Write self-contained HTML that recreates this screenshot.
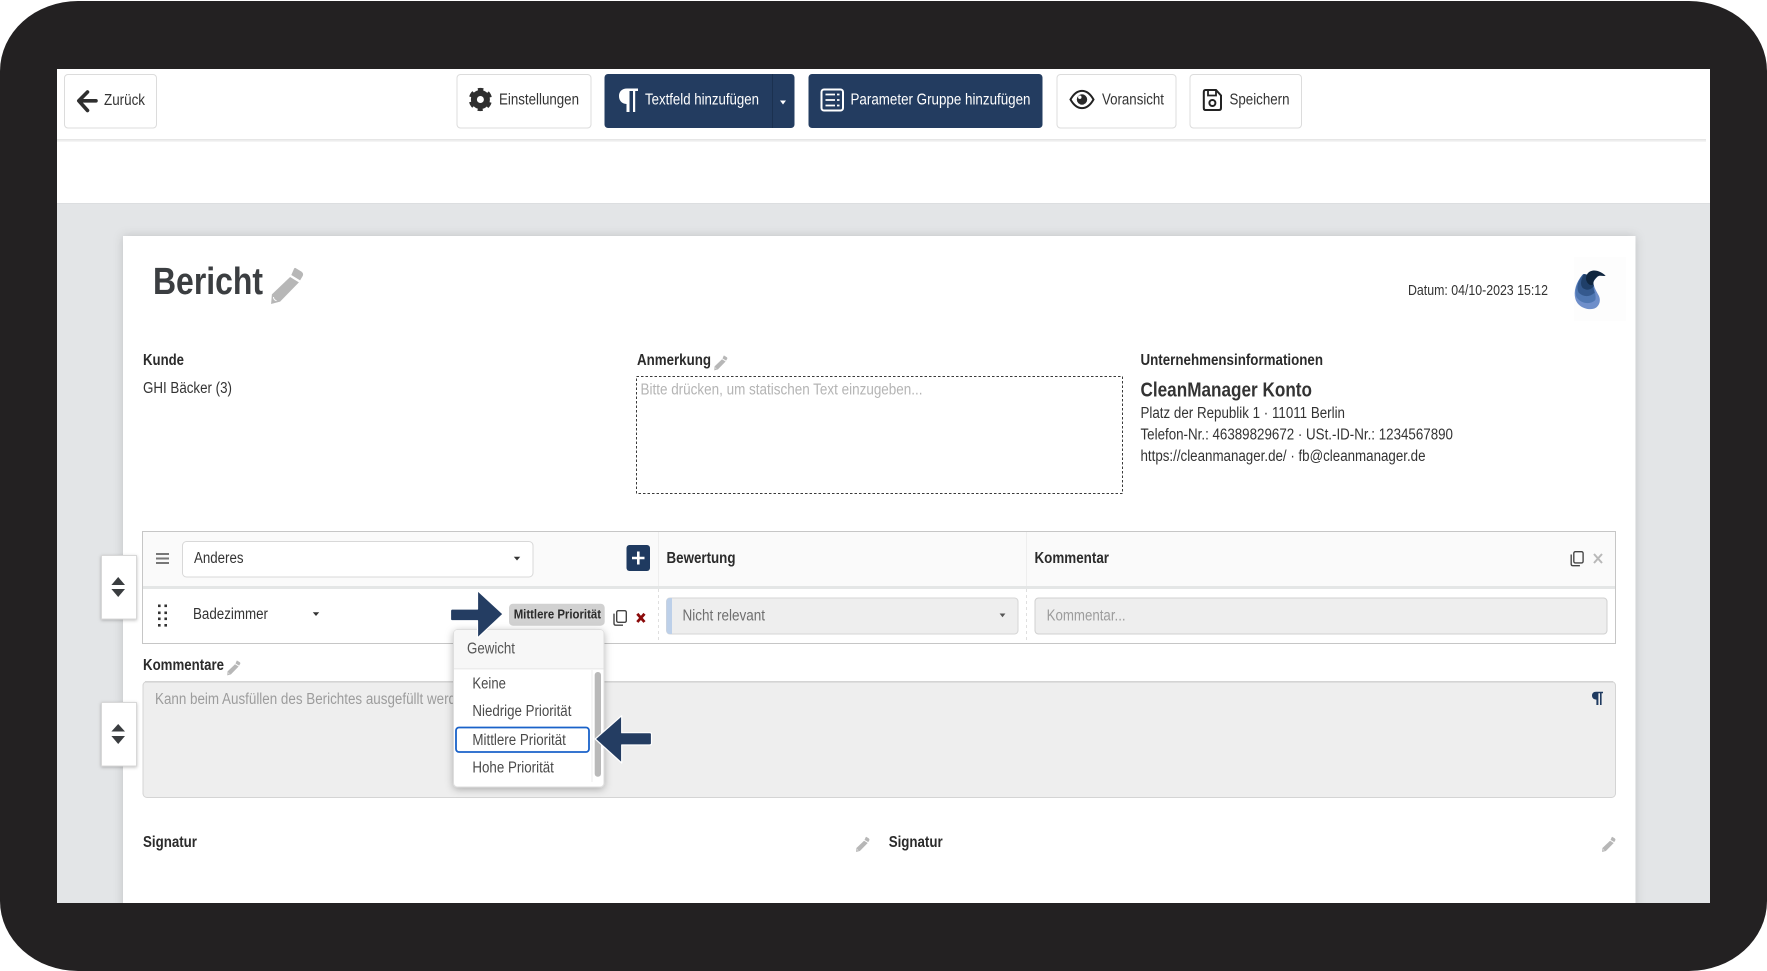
<!DOCTYPE html>
<html lang="de">
<head>
<meta charset="utf-8">
<title>Bericht</title>
<style>
html,body{margin:0;padding:0;background:#fff;width:1767px;height:971px;overflow:hidden}
svg{display:block}
text{font-family:"Liberation Sans",sans-serif;font-size:15.5px;fill:#333}
.b{font-weight:700;fill:#2b2b2b}
.w{fill:#fff}
.g{fill:#b4b4b4}
.m{fill:#9c9c9c}
.t{filter:blur(.3px)}
</style>
</head>
<body>
<svg width="1767" height="971" viewBox="0 0 1767 971" xmlns="http://www.w3.org/2000/svg">
<defs>
<clipPath id="scr"><rect x="57" y="69" width="1653" height="834"/></clipPath>
<symbol id="pen" viewBox="0 0 33 37">
<path fill="#b7b7b7" d="M25 1 L31 4.6 Q33.4 6.4 32.2 9 L29.6 13.4 L20.8 8 L23.4 2 Q24 .5 25 1 Z"/>
<path fill="#b7b7b7" d="M19.6 10 L28.4 15.4 L9.6 34.6 L.6 37 L1.4 27.4 Z"/>
<path fill="none" stroke="#fff" stroke-width="1" d="M3 30 Q3 33 6 33.6"/>
</symbol>
<symbol id="copy" viewBox="0 0 14 16">
<rect x="3.7" y=".7" width="9.6" height="11.6" rx="1.6" fill="none" stroke="#444" stroke-width="1.4"/>
<path fill="none" stroke="#444" stroke-width="1.4" d="M1 3.6 V13.4 Q1 15.2 2.8 15.2 H10"/>
</symbol>
<filter id="sh" x="-5%" y="-5%" width="110%" height="110%"><feDropShadow dx="0" dy="0" stdDeviation="5" flood-color="#000" flood-opacity=".16"/></filter>
<filter id="sh2" x="-20%" y="-20%" width="140%" height="140%"><feDropShadow dx="0" dy="2" stdDeviation="4" flood-color="#000" flood-opacity=".28"/></filter>
<filter id="sh3" x="-20%" y="-20%" width="140%" height="140%"><feDropShadow dx="0" dy="1" stdDeviation="1.5" flood-color="#000" flood-opacity=".25"/></filter>
</defs>

<rect x="0" y="1" width="1767" height="970" rx="78" ry="70" fill="#232122"/>

<g clip-path="url(#scr)">
<rect x="57" y="69" width="1653" height="834" fill="#e3e5e7"/>
<rect x="57" y="69" width="1653" height="134" fill="#fff"/>
<rect x="57" y="139" width="1649" height="1.5" fill="#e6e6e6"/>
<rect x="57" y="140.5" width="1649" height="1.5" fill="#f4f4f4"/>
<rect x="57" y="203" width="1653" height="1" fill="#dcdee0"/>
<rect x="123" y="236" width="1512.5" height="690" fill="#fff" filter="url(#sh)"/>
</g>

<!-- toolbar -->
<rect x="64.5" y="74.5" width="92" height="53.5" rx="3.5" fill="#fff" stroke="#dcdcdc"/>
<path d="M96 100.8 H80 M87.5 92 L78.8 100.8 L87.5 110.5" fill="none" stroke="#2f2f2f" stroke-width="3.6" stroke-linecap="round" stroke-linejoin="round"/>
<text class="t" x="104" y="105" textLength="41" lengthAdjust="spacingAndGlyphs">Zurück</text>

<rect x="457" y="74.5" width="134" height="53.5" rx="3.5" fill="#fff" stroke="#dcdcdc"/>
<g transform="translate(480.4 99.5)">
<circle r="6.5" fill="none" stroke="#2f2f2f" stroke-width="6"/>
<circle r="10" fill="none" stroke="#2f2f2f" stroke-width="3.2" stroke-dasharray="5.4 5.07" stroke-dashoffset="2.7" transform="rotate(90)"/>
</g>
<text class="t" x="499" y="104.5" textLength="80" lengthAdjust="spacingAndGlyphs">Einstellungen</text>

<rect x="604.5" y="74" width="190" height="54" rx="3.5" fill="#233c60"/>
<rect x="772" y="74" width="1" height="54" fill="#1b3150"/>
<path fill="#fff" d="M638 88.5 H627 C621.5 88.5 619 92 619 96 C619 100.5 621.5 103.6 626.5 104 V112 H629.5 V91 H633 V112 H635.2 V91 H638 Z"/>
<text class="t w" x="645" y="104.5" textLength="114" lengthAdjust="spacingAndGlyphs">Textfeld hinzufügen</text>
<path fill="#fff" d="M780 100.5 H786 L783 104.5 Z"/>

<rect x="808.5" y="74" width="234" height="54" rx="3.5" fill="#233c60"/>
<rect x="821.5" y="89.5" width="21.5" height="21" rx="2.5" fill="none" stroke="#fff" stroke-width="2"/>
<path d="M825.5 94.5 H835 M825.5 100 H835 M825.5 105.5 H835 M837 94.5 H839.5 M837 100 H839.5 M837 105.5 H839.5" stroke="#fff" stroke-width="1.8"/>
<text class="t w" x="850.5" y="104.5" textLength="180" lengthAdjust="spacingAndGlyphs">Parameter Gruppe hinzufügen</text>

<rect x="1057" y="74.5" width="119" height="53.5" rx="3.5" fill="#fff" stroke="#dcdcdc"/>
<path d="M1070.5 99.5 C1077 88 1087 88 1093.5 99.5 C1087 111 1077 111 1070.5 99.5 Z" fill="none" stroke="#222" stroke-width="2"/>
<circle cx="1082" cy="99.5" r="5.2" fill="#2a2a2a"/>
<circle cx="1079.8" cy="97.2" r="1.7" fill="#fff"/>
<text class="t" x="1102" y="104.5" textLength="62" lengthAdjust="spacingAndGlyphs">Voransicht</text>

<rect x="1190" y="74.5" width="111.5" height="53.5" rx="3.5" fill="#fff" stroke="#dcdcdc"/>
<path d="M1205.5 90 H1216 L1221 95.5 V108 Q1221 110 1219 110 H1205.5 Q1203.8 110 1203.8 108 V92 Q1203.8 90 1205.5 90 Z" fill="none" stroke="#222" stroke-width="2"/>
<path d="M1208 90 V95.5 H1216 V90" fill="none" stroke="#222" stroke-width="1.8"/>
<circle cx="1212.4" cy="103" r="3" fill="none" stroke="#222" stroke-width="2"/>
<text class="t" x="1229.5" y="104.5" textLength="60" lengthAdjust="spacingAndGlyphs">Speichern</text>

<!-- head -->
<text class="t" x="153" y="294" textLength="110" lengthAdjust="spacingAndGlyphs" style="font-size:38px;font-weight:700;fill:#3b3e41">Bericht</text>
<use href="#pen" x="270.5" y="267" width="33" height="37"/>
<text class="t" x="1408" y="295" textLength="140" lengthAdjust="spacingAndGlyphs" style="font-size:15px">Datum: 04/10-2023 15:12</text>
<rect x="1574" y="257" width="52" height="64" fill="#fbfbfb" opacity=".6"/>
<g transform="translate(1540 250) scale(.3333)">
<path fill="#6f8fca" d="M128 74 C108 96 100 125 106 146 C112 170 140 182 162 176 C178 170 184 152 176 136 C168 122 160 108 160 94 L175 76 Z"/>
<path fill="#4f77b2" d="M128 74 C110 96 102 122 110 142 C122 160 150 166 166 150 C170 136 160 112 158 94 L175 76 Z"/>
<path fill="#34598e" d="M130 72 C114 92 108 112 116 128 C130 142 150 142 164 128 C160 116 158 106 160 94 L172 78 Z"/>
<path fill="#1f3f69" d="M132 72 C122 90 120 104 128 114 C142 124 154 118 162 108 C158 100 160 92 172 80 Z"/>
<path fill="#10263f" d="M197 77 C186 68 172 60 158 62 C146 64 138 72 138 88 C142 102 150 108 160 104 C158 94 164 84 176 78 C184 76 192 80 197 77 Z"/>
</g>

<!-- info -->
<text class="t b" x="143" y="365" textLength="41" lengthAdjust="spacingAndGlyphs">Kunde</text>
<text class="t" x="143" y="393" textLength="89" lengthAdjust="spacingAndGlyphs">GHI Bäcker (3)</text>
<text class="t b" x="637" y="365" textLength="74" lengthAdjust="spacingAndGlyphs">Anmerkung</text>
<use href="#pen" x="714" y="355" width="13.5" height="15.5"/>
<rect x="636.5" y="376.5" width="486" height="117" fill="#fff" stroke="#3a3a3a" stroke-dasharray="2.5 2"/>
<text class="t g" x="640.5" y="394.5" textLength="282" lengthAdjust="spacingAndGlyphs">Bitte drücken, um statischen Text einzugeben...</text>
<text class="t b" x="1140.5" y="365" textLength="182.5" lengthAdjust="spacingAndGlyphs">Unternehmensinformationen</text>
<text class="t b" x="1140.5" y="396.5" textLength="171.5" lengthAdjust="spacingAndGlyphs" style="font-size:20px;fill:#333">CleanManager Konto</text>
<text class="t" x="1140.5" y="418" textLength="204.5" lengthAdjust="spacingAndGlyphs">Platz der Republik 1 · 11011 Berlin</text>
<text class="t" x="1140.5" y="439.5" textLength="312.5" lengthAdjust="spacingAndGlyphs">Telefon-Nr.: 46389829672 · USt.-ID-Nr.: 1234567890</text>
<text class="t" x="1140.5" y="461" textLength="285" lengthAdjust="spacingAndGlyphs">https://cleanmanager.de/ · fb@cleanmanager.de</text>

<!-- table -->
<rect x="142.5" y="531.5" width="1473" height="112" fill="#fff" stroke="#c6c6c6"/>
<rect x="143" y="532" width="1472" height="54" fill="#fafafa"/>
<rect x="143" y="586" width="1472" height="3" fill="#e4e6e6"/>
<path d="M658.5 532 V586 M1026.5 532 V586" stroke="#eeeeee"/>
<path d="M658.5 589 V643 M1026.5 589 V643" stroke="#dfdfdf" stroke-dasharray="3 3"/>

<path d="M156 554 H169 M156 558.5 H169 M156 563 H169" stroke="#777" stroke-width="1.9"/>
<rect x="182.5" y="541.5" width="350.5" height="35.5" rx="4" fill="#fff" stroke="#d8d8d8"/>
<text class="t" x="194" y="563" textLength="49.5" lengthAdjust="spacingAndGlyphs">Anderes</text>
<path fill="#333" d="M513.8 556.8 H520.2 L517 560.5 Z"/>
<rect x="626.5" y="545" width="23.5" height="26" rx="3" fill="#1f3a60"/>
<path d="M638.3 551.5 V564.5 M632 558 H644.5" stroke="#fff" stroke-width="2.6"/>
<text class="t b" x="666.5" y="563" textLength="69" lengthAdjust="spacingAndGlyphs">Bewertung</text>
<text class="t b" x="1034.5" y="563" textLength="74.5" lengthAdjust="spacingAndGlyphs">Kommentar</text>
<use href="#copy" x="1570" y="551" width="14" height="15.5"/>
<path d="M1594 554 L1602 563 M1602 554 L1594 563" stroke="#b8b8b8" stroke-width="2"/>

<!-- row -->
<g fill="#333">
<rect x="158" y="604.5" width="2.6" height="2.6"/><rect x="164.4" y="604.5" width="2.6" height="2.6"/>
<rect x="158" y="611.5" width="2.6" height="2.6"/><rect x="164.4" y="611.5" width="2.6" height="2.6"/>
<rect x="158" y="617.5" width="2.6" height="2.6"/><rect x="164.4" y="617.5" width="2.6" height="2.6"/>
<rect x="158" y="624" width="2.6" height="2.6"/><rect x="164.4" y="624" width="2.6" height="2.6"/>
</g>
<text class="t" x="193" y="619" textLength="75" lengthAdjust="spacingAndGlyphs">Badezimmer</text>
<path fill="#333" d="M312.8 612.2 H319.2 L316 616 Z"/>
<rect x="509" y="603.7" width="95.7" height="22" rx="4" fill="#d1d1d1"/>
<text class="t" x="513.7" y="618.5" textLength="87.3" lengthAdjust="spacingAndGlyphs" style="font-size:13px;font-weight:700;fill:#2b2b2b">Mittlere Priorität</text>
<use href="#copy" x="613" y="610" width="14" height="16"/>
<path d="M637.3 613.8 L644.5 622 M644.5 613.8 L637.3 622" stroke="#8b0a0a" stroke-width="2.8"/>

<rect x="666.5" y="598" width="351.5" height="36" rx="3.5" fill="#eeeeee" stroke="#d6d6d6"/>
<path d="M672 598 H670 Q666.5 598 666.5 601.5 V630.5 Q666.5 634 670 634 H672 Z" fill="#bdd0e9"/>
<text class="t" x="682.5" y="620.5" textLength="82.5" lengthAdjust="spacingAndGlyphs" style="fill:#6f6f6f">Nicht relevant</text>
<path fill="#555" d="M999.6 613.5 H1005.4 L1002.5 617.2 Z"/>
<rect x="1035" y="598" width="572" height="36" rx="3.5" fill="#eeeeee" stroke="#d0d0d0"/>
<text class="t m" x="1046.6" y="620.5" textLength="79" lengthAdjust="spacingAndGlyphs">Kommentar...</text>

<!-- handles -->
<rect x="101.5" y="555.5" width="35" height="63.5" fill="#fff" stroke="#d8d8d8" filter="url(#sh3)"/>
<path fill="#3a3d40" d="M118.2 577 L125 585 H111.4 Z M111.4 589 H125 L118.2 597 Z"/>
<rect x="101.5" y="702.5" width="35" height="63.5" fill="#fff" stroke="#d8d8d8" filter="url(#sh3)"/>
<path fill="#3a3d40" d="M118.2 724 L125 731.5 H111.4 Z M111.4 736 H125 L118.2 744 Z"/>

<!-- kommentare -->
<text class="t b" x="143" y="670" textLength="81" lengthAdjust="spacingAndGlyphs">Kommentare</text>
<use href="#pen" x="227" y="660" width="13.5" height="15.5"/>
<rect x="143" y="681.5" width="1472.5" height="116" rx="4" fill="#eeeeee" stroke="#d4d4d4"/>
<rect x="145" y="681" width="1468" height="1.6" fill="#d4d4d4"/>
<text class="t m" x="155" y="704" textLength="301" lengthAdjust="spacingAndGlyphs">Kann beim Ausfüllen des Berichtes ausgefüllt werd</text>
<path fill="#1f3a60" d="M1603 691.7 H1596 C1593.4 691.7 1592 693.4 1592 695.5 C1592 698 1593.8 699.6 1596.4 699.6 V705 H1598.4 V693.2 H1600 V705 H1601.6 V693.2 H1603 Z"/>

<!-- dropdown -->
<rect x="453.5" y="629.5" width="150.5" height="157.5" rx="4" fill="#fff" stroke="#dedede" filter="url(#sh2)"/>
<path d="M454 668 V633.5 Q454 630 457.5 630 H600 Q603.5 630 603.5 633.5 V668 Z" fill="#f7f7f7"/>
<rect x="454" y="668" width="149.5" height="1.5" fill="#ececec"/>
<text class="t" x="467" y="653.5" textLength="48" lengthAdjust="spacingAndGlyphs" style="fill:#555">Gewicht</text>
<rect x="591.5" y="670" width="1" height="112" fill="#eeeeee"/>
<rect x="594.7" y="672" width="6.3" height="104.7" rx="3" fill="#b9b9b9"/>
<text class="t" x="472.4" y="688.5" textLength="33.5" lengthAdjust="spacingAndGlyphs" style="fill:#4a4a4a">Keine</text>
<text class="t" x="472.4" y="716" textLength="99" lengthAdjust="spacingAndGlyphs" style="fill:#4a4a4a">Niedrige Priorität</text>
<rect x="456" y="727.5" width="133" height="24.5" rx="3" fill="#fff" stroke="#1a62c9" stroke-width="1.8"/>
<text class="t" x="472.4" y="745" textLength="93.5" lengthAdjust="spacingAndGlyphs" style="fill:#4a4a4a">Mittlere Priorität</text>
<text class="t" x="472.4" y="772.5" textLength="81.5" lengthAdjust="spacingAndGlyphs" style="fill:#4a4a4a">Hohe Priorität</text>

<!-- arrows -->
<path fill="#243d62" stroke="#fff" stroke-width="1.2" stroke-linejoin="round" d="M452 609 H477.5 V590.5 L503 614 L477.5 638 V620.7 H452 Q450.5 620.7 450.5 619 V611 Q450.5 609 452 609 Z"/>
<path fill="#243d62" stroke="#fff" stroke-width="1.2" stroke-linejoin="round" d="M649.5 732.7 H621.7 V715.7 L595.2 739 L621.7 763 V745 H649.5 Q651.5 745 651.5 743.5 V734 Q651.5 732.7 649.5 732.7 Z"/>

<!-- signatur -->
<text class="t b" x="143" y="847" textLength="54" lengthAdjust="spacingAndGlyphs">Signatur</text>
<use href="#pen" x="855.5" y="836.5" width="14.5" height="15.5"/>
<text class="t b" x="888.7" y="847" textLength="54" lengthAdjust="spacingAndGlyphs">Signatur</text>
<use href="#pen" x="1601.5" y="836.5" width="14.5" height="15.5"/>
</svg>
</body>
</html>
